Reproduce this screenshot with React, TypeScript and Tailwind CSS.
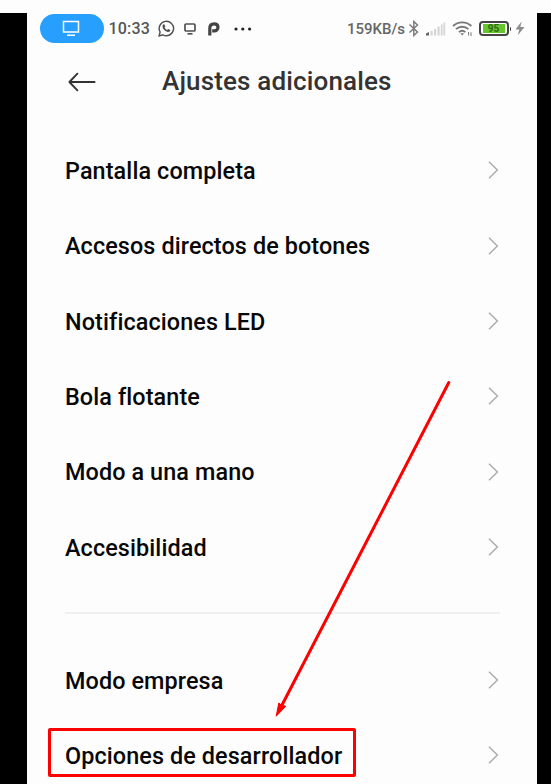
const primary = [
  'Pantalla completa',
  'Accesos directos de botones',
  'Notificaciones LED',
  'Bola flotante',
  'Modo a una mano',
  'Accesibilidad',
];

function Row({ label, highlighted = false }: { label: string; highlighted?: boolean }) {
  return (
    <li className="relative flex h-[75.4px] items-center justify-between">
      <span className="pt-[1.5px] whitespace-nowrap text-[23.4px] leading-none font-medium tracking-[0.1px] text-[#080808]">{label}</span>
      <svg className="mb-px h-5 w-3" viewBox="0 0 12 20" fill="none" stroke="#adadad" strokeWidth="1.5">
        <path d="M1 1.7 9.4 10 1 18.3" />
      </svg>
      {highlighted && <span className="absolute top-[10px] -left-[17px] h-[49px] w-[308px] rounded-[2px] border-3 border-[#fe0000]" />}
    </li>
  );
}

function StatusBar() {
  return (
    <header className="flex h-[31px] items-center pl-[13px] text-[#555]">
      <div className="flex h-[29px] w-[63.5px] items-center justify-center rounded-full bg-[#279fff] pr-[2px]">
        <svg width="18" height="17" viewBox="0 0 18 17" fill="none" stroke="#fff" strokeWidth="1.5">
          <path d="M1.5 1.5h15v10.5h-15zM5 15.3h8" />
        </svg>
      </div>
      <span className="ml-[5px] w-[42px] pt-px text-[16px] leading-none font-medium tracking-[0.2px]">10:33</span>
      <svg className="ml-[7px]" width="17" height="17" viewBox="0 0 17 17" fill="none" stroke="#505050" strokeWidth="1.4">
        <path d="M1.1 15.9 2.1 12a7.2 7.2 0 1 1 2.8 2.8z" />
        <path d="M5.2 4.6 6.3 4.2 7.4 6.5 6.6 7.6c.5 1.1 1.3 1.8 2.5 2.4l1.1-1 2.2 1.1c-.2 1.7-1.7 2.2-3.2 1.7C6.7 11 4.8 9 4.5 7c-.1-1 .2-1.9.7-2.4z" fill="#505050" stroke="none" />
      </svg>
      <svg className="ml-[9px]" width="12" height="12" viewBox="0 0 12 12" fill="none" stroke="#505050" strokeWidth="1.7">
        <rect x="1" y="1" width="10" height="7" rx="1" />
        <path d="M3.5 10.8h5" />
      </svg>
      <svg className="ml-[12px]" width="12" height="14" viewBox="0 0 12 14" fill="none">
        <path d="M1.8 13.5V6.3C1.8 3.4 3.4 1.9 6 1.9s4 1.4 4 3.4S8.5 8.9 6.3 8.9H4.2" stroke="#444" strokeWidth="3.2" />
      </svg>
      <svg className="ml-[14.5px]" width="18" height="4" viewBox="0 0 18 4" fill="#222">
        <circle cx="2" cy="2" r="1.6" /><circle cx="8.8" cy="2" r="1.6" /><circle cx="15.6" cy="2" r="1.6" />
      </svg>
      <span className="ml-auto pt-px text-[15px] leading-none font-medium text-[#666]">159KB/s</span>
      <svg className="ml-[2.5px]" width="12" height="17" viewBox="0 0 12 17" fill="none" stroke="#777" strokeWidth="1.4">
        <path d="M1.5 4.5 9.5 12 5.8 15.5V1.5L9.5 5 1.5 12.5" />
      </svg>
      <svg className="ml-[5px]" width="21" height="14" viewBox="0 0 21 14">
        <path d="M1 13.5V11.5L4 10v3.5z" fill="#666" />
        <path d="M5.5 13.5V9h2.2v4.5zM9 13.5V7h2.2v6.5zM12.5 13.5V4.5h2.2v9zM15.8 13.5v-11H17.6v11zM18.4 13.5V.5h1.8v13z" fill="#d6d6d6" />
      </svg>
      <svg className="ml-[6px]" width="21" height="17" viewBox="0 0 21 17" fill="none" stroke="#777" strokeWidth="1.8">
        <path d="M1 6c5.2-4.8 13.2-4.8 18.4 0M4 9.2c3.5-3.3 8.9-3.3 12.4 0M7 12.2c1.9-1.7 4.5-1.7 6.4 0" />
        <path d="M8.3 13.2h3.8l-1.9 2.2z" fill="#777" stroke="none" />
        <path d="M16.6 12v3.5M19 12.3V16" strokeWidth="1" />
      </svg>
      <div className="ml-[6px] flex h-[15px] w-[30px] items-center justify-center rounded-[4px] border-2 border-[#444]">
        <span className="flex h-[9px] w-[22px] items-center justify-center bg-[#65c52b] text-[10px] leading-none font-bold text-[#32691c]">95</span>
      </div>
      <span className="ml-px h-1 w-[1.5px] rounded-r bg-[#444]" />
      <svg className="mr-[12.5px] ml-[3.5px]" width="10" height="15" viewBox="0 0 10 15">
        <path d="M6.5.5.5 8.5h3.8L2.8 14.2 9.5 6H5.4z" fill="#8c8c8c" />
      </svg>
    </header>
  );
}

export default function App() {
  return (
    <div className="relative h-[784px] w-[551px] overflow-hidden bg-[#fdfdfd] pt-[13px] font-['Roboto',sans-serif]">
      <div className="h-[771px] border-r-14 border-l-27 border-black">
        <StatusBar />
        <div className="flex h-[76px] items-center pl-[41px] text-[#333]">
          <svg width="28" height="20" viewBox="0 0 28 20" fill="none" stroke="#333" strokeWidth="1.9" strokeLinecap="round" strokeLinejoin="round">
            <path d="M26.6 10H1.4M9.4 1.7 1.4 10l8 8.3" />
          </svg>
          <h1 className="ml-[66px] pb-[2px] whitespace-nowrap text-[26px] leading-none font-medium tracking-[0.15px]">Ajustes adicionales</h1>
        </div>
        <ul className="mt-[13px] mr-[37px] ml-[38px]">
          {primary.map((label) => <Row key={label} label={label} />)}
        </ul>
        <hr className="mt-[27px] mr-[37px] ml-[38px] border-t-2 border-[#f0f0f0]" />
        <ul className="mt-[28.5px] mr-[37px] ml-[38px]">
          <Row label="Modo empresa" />
          <Row label="Opciones de desarrollador" highlighted />
        </ul>
      </div>
      <svg className="pointer-events-none absolute inset-0" width="551" height="784" viewBox="0 0 551 784" fill="none">
        <path d="M448.8 382.5 281 707" stroke="#fe0000" strokeWidth="3" strokeLinecap="round" />
        <path d="M276.2 716.2 278.8 703 281.6 705.3 285.8 706.2z" fill="#fe0000" stroke="#fe0000" />
      </svg>
    </div>
  );
}
